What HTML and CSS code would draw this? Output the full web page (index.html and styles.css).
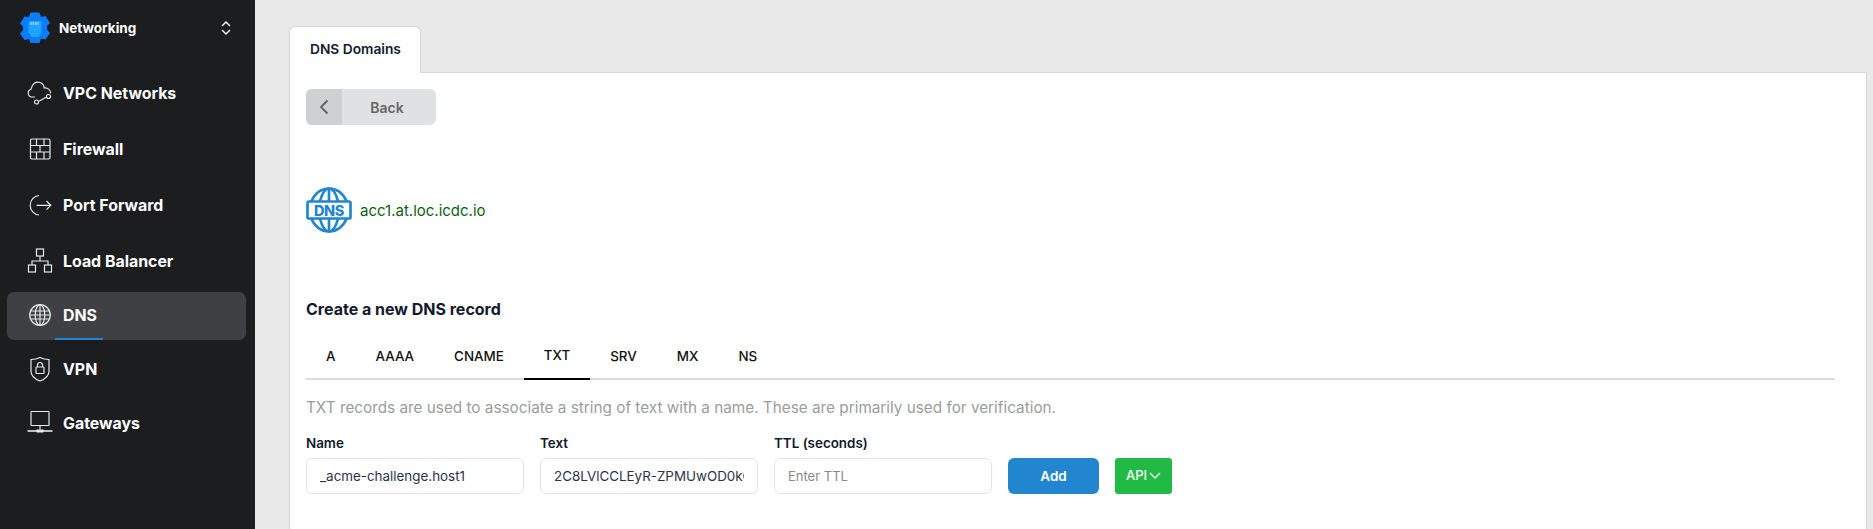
FILE: index.html
```html
<!DOCTYPE html>
<html lang="en">
<head>
<meta charset="utf-8">
<title>DNS Domains</title>
<link rel="stylesheet" href="styles.css">
</head>
<body>
<div class="app">
  <aside class="sidebar">
    <div class="brand">
      <svg class="brand-logo" width="30" height="32" viewBox="0 0 30 32">
        <path fill="#0a7cff" d="M10.500.500h9l1.500 4.500 4.500-1 4.500 7-3 3v3.500l3 3.500-4.500 6.500-4.500-1-1.500 4.500h-9L9 27l-4.500 1L0 21.500 3 18v-3.500l-3-3 4.500-7L9 5z"/>
        <path fill="#1fa3ff" d="M8.500 9h13v11.500L18.500 25h-7l-3-4.500z"/>
        <path fill="#a8dcff" d="M10.500 10h1.200v3h-1.200zM12.800 10H14v3h-1.200zM15.100 10h1.200v3h-1.200zM17.400 10h1.200v3h-1.200z"/>
      </svg>
      <span class="brand-name">Networking</span>
      <svg class="brand-caret" width="12" height="16" viewBox="0 0 12 16" fill="none" stroke="#f2f2f2" stroke-width="1.500">
        <path d="M2 6l4-4 4 4M2 10l4 4 4-4"/>
      </svg>
    </div>
    <nav class="nav">
      <a class="nav-item">
        <svg class="nav-icon" width="26" height="26" viewBox="0 0 26 26" fill="none" stroke="#e8e8e8" stroke-width="1.200">
          <path d="M8 17H5a4 4 0 0 1-1-7.800C5 4 9 1 13 2.500c2.500.8 4 3 4.300 5.500 3.500-.5 6.600 2.300 6.300 5.300"/>
          <circle cx="9.500" cy="22" r="2"/><circle cx="21.500" cy="16.500" r="2"/>
          <path d="M11.500 21.500l8-4.500"/>
        </svg>
        <span>VPC Networks</span>
      </a>
      <a class="nav-item">
        <svg class="nav-icon" width="26" height="26" viewBox="0 0 26 26" fill="none" stroke="#e8e8e8" stroke-width="1.200">
          <rect x="3.500" y="3" width="19.500" height="20" rx="1.500"/>
          <path d="M3.500 9.500h19.500M3.500 16h19.500M9.500 3v6.500M17 3v6.500M13 9.500V16M9.500 16v7M17 16v7"/>
        </svg>
        <span>Firewall</span>
      </a>
      <a class="nav-item">
        <svg class="nav-icon" width="26" height="26" viewBox="0 0 26 26" fill="none" stroke="#e8e8e8" stroke-width="1.200">
          <path d="M12 3.500a9.800 9.800 0 0 0 0 19.500"/>
          <path d="M9.500 13.300h14M19.500 9l4.300 4.300-4.300 4.300"/>
        </svg>
        <span>Port Forward</span>
      </a>
      <a class="nav-item">
        <svg class="nav-icon" width="26" height="26" viewBox="0 0 26 26" fill="none" stroke="#e8e8e8" stroke-width="1.200">
          <rect x="9.500" y="1" width="7" height="7"/>
          <rect x="1.500" y="17" width="7" height="7"/><rect x="17.500" y="17" width="7" height="7"/>
          <path d="M13 8v5M5 17v-4h16v4"/>
        </svg>
        <span>Load Balancer</span>
      </a>
      <a class="nav-item active">
        <svg class="nav-icon" width="26" height="26" viewBox="0 0 26 26" fill="none" stroke="#e8e8e8" stroke-width="1.200">
          <circle cx="13" cy="13" r="10.300"/>
          <ellipse cx="13" cy="13" rx="4.800" ry="10.300"/>
          <path d="M13 2.700v20.600M3.500 9h19M3.500 17h19M2.700 13h20.600"/>
        </svg>
        <span>DNS</span>
      </a>
      <a class="nav-item">
        <svg class="nav-icon" width="26" height="26" viewBox="0 0 26 26" fill="none" stroke="#e8e8e8" stroke-width="1.200">
          <path d="M13 1.500c3 1.500 6 2 9 2v12c0 4-4 7.500-9 9.500-5-2-9-5.500-9-9.500v-12c3 0 6-.5 9-2z"/>
          <rect x="9" y="11" width="8" height="6.500" rx=".8"/>
          <path d="M10.500 11V9a2.500 2.500 0 0 1 5 0v2"/>
        </svg>
        <span>VPN</span>
      </a>
      <a class="nav-item">
        <svg class="nav-icon" width="26" height="26" viewBox="0 0 26 26" fill="none" stroke="#e8e8e8" stroke-width="1.200">
          <rect x="4" y="1.500" width="18" height="14" rx=".8"/>
          <path d="M13 15.500v4"/>
          <path d="M.5 21h25" stroke-width="2" stroke="#bdbdbd"/>
          <rect x="9.500" y="19.500" width="7" height="3" fill="#e8e8e8" stroke="none"/>
        </svg>
        <span>Gateways</span>
      </a>
    </nav>
  </aside>
  <main class="main">
    <div class="tab-strip">
      <div class="page-tab">DNS Domains</div>
    </div>
    <section class="panel">
      <button class="back-btn" type="button">
        <span class="back-arrow">
          <svg width="10" height="16" viewBox="0 0 10 16" fill="none" stroke="#5f5f5f" stroke-width="1.800"><path d="M8.500 1.500L2 8l6.500 6.500"/></svg>
        </span>
        <span class="back-label">Back</span>
      </button>
      <div class="domain">
        <svg width="46" height="46" viewBox="0 0 46 46" fill="none" stroke="#2185d0" stroke-width="2.700">
          <path d="M5 15C9 6 16 1.500 23 1.500S37 6 41 15"/>
          <path d="M5 31c4 9 11 13.500 18 13.500S37 40 41 31"/>
          <path d="M14 14c2-7 5-12.500 9-12.500S30 7 32 14M14 32c2 7 5 12.500 9 12.500S30 39 32 32M23 1.500V14M23 32v12.500"/>
          <rect x="1.500" y="14.500" width="43" height="17" rx="1.500" fill="#fff"/>
          <text class="dns-glyph" x="23" y="28.500" text-anchor="middle">DNS</text>
        </svg>
        <span class="domain-name">acc1.at.loc.icdc.io</span>
      </div>
      <h2 class="create-title">Create a new DNS record</h2>
      <div class="record-tabs">
        <span class="record-tab">A</span>
        <span class="record-tab">AAAA</span>
        <span class="record-tab">CNAME</span>
        <span class="record-tab selected">TXT</span>
        <span class="record-tab">SRV</span>
        <span class="record-tab">MX</span>
        <span class="record-tab">NS</span>
      </div>
      <p class="help">TXT records are used to associate a string of text with a name. These are primarily used for verification.</p>
      <form class="record-form">
        <label class="field">
          <span class="field-label">Name</span>
          <input class="field-input" type="text" value="_acme-challenge.host1">
        </label>
        <label class="field">
          <span class="field-label">Text</span>
          <input class="field-input" type="text" value="2C8LVlCCLEyR-ZPMUwOD0kGxT7aQ">
        </label>
        <label class="field">
          <span class="field-label">TTL (seconds)</span>
          <input class="field-input" type="text" placeholder="Enter TTL">
        </label>
        <button class="add-btn" type="button">Add</button>
        <button class="api-btn" type="button">API
          <svg width="12" height="7" viewBox="0 0 12 7" fill="none" stroke="#fff" stroke-width="1.300"><path d="M1 1l5 5 5-5"/></svg>
        </button>
      </form>
    </section>
  </main>
</div>
</body>
</html>
```
FILE: styles.css
```css
* { box-sizing: border-box; }
html, body { margin: 0; height: 100%; overflow: hidden; }
body { font-family: Inter, "Liberation Sans", sans-serif; background: #e9e9e9; }
.app { display: flex; height: 529px; }

.sidebar { width: 255px; flex: none; background: #1c1d1f; color: #fff; }
.brand { display: flex; align-items: center; height: 55px; padding: 0 23px 0 20px; }
.brand-logo { flex: none; }
.brand-name { margin-left: 9px; font-size: 13.500px; font-weight: 700; flex: 1; }
.brand-caret { flex: none; }
.nav { display: flex; flex-direction: column; padding: 14px 9px 0 7px; }
.nav-item { position: relative; display: flex; align-items: center; height: 48px; margin-bottom: 8px; padding-left: 20px; border-radius: 7px; font-size: 15.900px; font-weight: 700; }
.nav-item span { margin-left: 10px; }
.nav-icon { flex: none; }
.nav-item.active { background: #3f4043; margin-top: -1px; margin-bottom: 5px; padding-bottom: 2px; }
.nav-item.active ~ .nav-item { margin-bottom: 6px; }
.nav-item.active::after { content: ""; position: absolute; left: 48px; bottom: 0; width: 48px; height: 2px; background: #2185d0; }

.main { flex: 1; padding: 26px 6px 0 34px; display: flex; flex-direction: column; min-width: 0; }
.tab-strip { display: flex; height: 47px; position: relative; z-index: 1; margin-bottom: -1px; }
.page-tab { width: 132px; height: 47px; padding-top: 14px; padding-left: 20px; background: #fff; border: 1px solid #d6d6d6; border-bottom: 0; border-radius: 6px 6px 0 0; font-size: 13.750px; font-weight: 600; color: #121a2e; }
.panel { flex: 1; background: #fff; border: 1px solid #d6d6d6; border-bottom: 0; padding: 16px 31px 0 16px; }

.back-btn { display: flex; align-items: center; width: 130px; height: 36px; padding: 0 4px 0 0; border: 0; border-radius: 6px; background: #e0e1e2; overflow: hidden; font: inherit; }
.back-arrow { display: flex; align-items: center; justify-content: center; width: 36px; height: 36px; background: #cfd0d1; }
.back-label { flex: 1; font-size: 14px; font-weight: 600; color: #666; }

.domain { display: flex; align-items: center; gap: 8px; margin-top: 62px; height: 46px; }
.dns-glyph { font-family: Inter, "Liberation Sans", sans-serif; font-size: 14.500px; font-weight: 800; letter-spacing: -.4px; fill: #2185d0; stroke: none; }
.domain-name { font-size: 15px; color: #0b5f10; }

.create-title { margin: 67px 0 0; font-size: 16px; line-height: 19px; font-weight: 700; color: #121a2e; }
.record-tabs { display: flex; margin-top: 15px; height: 46px; border-bottom: 2px solid #dcdcdc; }
.record-tab { padding: 14px 20px 0; height: 46px; font-size: 13.400px; font-weight: 500; color: #111; text-align: center; }
.record-tab.selected { border-bottom: 2px solid #000; padding-top: 13px; }
.help { margin: 18px 0 0; font-size: 15.300px; line-height: 20px; color: #9b9ca0; }
.record-form { display: flex; align-items: flex-end; gap: 16px; margin-top: 17px; }
.field { display: flex; flex-direction: column; width: 218px; }
.field-label { font-size: 13.400px; line-height: 16px; font-weight: 600; color: #121a2e; margin-bottom: 7px; }
.field-input { width: 218px; height: 36px; padding: 0 13px; border: 1px solid #e2e6ee; border-radius: 6px; font: 13.400px Inter, "Liberation Sans", sans-serif; color: #2b3447; outline: none; }
.field-input::placeholder { color: #8a8a8a; font-size: 13px; }
.add-btn { width: 91px; height: 36px; border: 0; border-radius: 6px; background: #2185d0; color: #fff; font: 600 13.500px Inter, "Liberation Sans", sans-serif; }
.api-btn { display: flex; align-items: center; justify-content: center; gap: 2px; width: 57px; height: 36px; padding: 0 0 2px; border: 0; border-radius: 3px; background: #21ba45; color: #fff; font: 500 13px Inter, "Liberation Sans", sans-serif; }
```
